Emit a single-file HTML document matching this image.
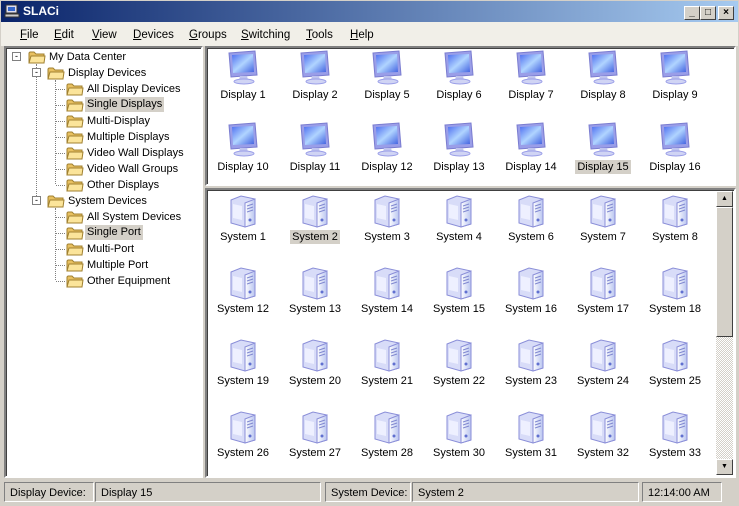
<!DOCTYPE html>
<html><head><style>
*{margin:0;padding:0;box-sizing:border-box}
body{width:739px;height:506px;background:#d4d0c8;font-family:"Liberation Sans",sans-serif;font-size:11px;position:relative;overflow:hidden;color:#000}
.a{position:absolute}
#title{left:0;top:0;width:739px;height:22px;background:linear-gradient(90deg,#0a246a,#a6caf0);border:1px solid #d4d0c8;border-bottom:none}
#title span{position:absolute;left:22px;top:3px;color:#fff;font-weight:bold;font-size:12px}
.tb{position:absolute;top:5px;width:16px;height:14px;background:#d4d0c8;border:1px solid;border-color:#fff #404040 #404040 #fff;font-size:10px;font-weight:bold;text-align:center;line-height:12px}
#menu{left:1px;top:22px;width:737px;height:24px;background:#f1efe8}
#menu span{position:absolute;top:7px;font-size:11.5px}
.pan{background:#fff;border:2px solid;border-color:#808080 #fff #fff #808080;box-shadow:inset 1px 1px 0 #404040}
.t{position:absolute;font-size:11px;white-space:nowrap;padding:0 2px;line-height:14px}
.sel{background:#d4d0c8}
.f{position:absolute;width:18px;height:14px}
.lab{position:absolute;width:72px;text-align:center;font-size:11px;line-height:14px;top:0}
.lab span{padding:0 2px}
.ic{position:absolute}
.sb{position:absolute;top:482px;height:20px;border:1px solid;border-color:#808080 #fff #fff #808080;font-size:11px;padding:4px 0 0 5px}
</style></head><body>
<svg width="0" height="0" style="position:absolute">
<defs>
<linearGradient id="scr" x1="0" y1="0" x2="1" y2="1"><stop offset="0" stop-color="#4f6ff0"/><stop offset=".5" stop-color="#b0d4ff"/><stop offset="1" stop-color="#4060e0"/></linearGradient>
<linearGradient id="tw" x1="0" y1="0" x2="1" y2="0"><stop offset="0" stop-color="#fff"/><stop offset="1" stop-color="#b8c4f0"/></linearGradient>
<symbol id="mon" viewBox="0 0 36 36"><path d="M4 3 L30 1 L32 25 L6 27 Z" fill="#9a9ee8" stroke="#7a7cd0"/><path d="M7 5 L28 4 L29 22 L8 23 Z" fill="url(#scr)"/><path d="M15 26 L22 26 L23 30 L14 30Z" fill="#c0c4ee"/><ellipse cx="19" cy="31.5" rx="10" ry="2.5" fill="#d0d4f4" stroke="#9a9ee8"/></symbol>
<symbol id="sys" viewBox="0 0 30 34"><path d="M3 6 L13 2 L27 5 L27 30 L17 33 L3 29Z" fill="#d8dcf8" stroke="#8a8ed8"/><path d="M17 9 L27 5 L27 30 L17 33Z" fill="url(#tw)" stroke="#8a8ed8"/><path d="M19 12 L25 10 M19 15 L25 13 M19 18 L25 16" stroke="#8088d0"/><circle cx="22" cy="26" r="1.5" fill="#6070d0"/><path d="M5 10 L14 12 L14 26 L5 24Z" fill="#eef0ff"/></symbol>
<symbol id="fold" viewBox="0 0 18 14"><path d="M1 3 L1 13 L16 13 L16 4 L8 4 L6 2 L2 2Z" fill="#e8c060" stroke="#a08030"/><path d="M1 13 L3 6 L17 6 L16 13Z" fill="#fbe49a" stroke="#a08030"/></symbol>
</defs></svg>

<div id="title" class="a"><svg class="a" style="left:3px;top:3px" width="16" height="14"><rect x="2" y="1" width="11" height="8" fill="#dde" stroke="#333"/><rect x="4" y="3" width="7" height="4" fill="#36c"/><rect x="1" y="10" width="14" height="3" fill="#ccc" stroke="#333"/></svg><span>SLACi</span>
<div class="tb" style="left:683px">_</div><div class="tb" style="left:699px">□</div><div class="tb" style="left:717px">×</div></div>
<div id="menu" class="a">
<span style="left:19px"><u>F</u>ile</span><span style="left:53px"><u>E</u>dit</span><span style="left:91px"><u>V</u>iew</span><span style="left:132px"><u>D</u>evices</span><span style="left:188px"><u>G</u>roups</span><span style="left:240px"><u>S</u>witching</span><span style="left:305px"><u>T</u>ools</span><span style="left:349px"><u>H</u>elp</span></div>

<div class="a pan" style="left:4px;top:46px;width:199px;height:432px"></div>
<div class="a" style="left:36px;top:64px;height:140px;border-left:1px dotted #808080"></div>
<div class="a" style="left:55px;top:80px;height:104px;border-left:1px dotted #808080"></div>
<div class="a" style="left:55px;top:208px;height:72px;border-left:1px dotted #808080"></div>
<div class="a" style="left:12px;top:52px;width:9px;height:9px;border:1px solid #808080;background:#fff;font-size:9px;line-height:6px;text-align:center">-</div>
<div class="a" style="left:32px;top:68px;width:9px;height:9px;border:1px solid #808080;background:#fff;font-size:9px;line-height:6px;text-align:center">-</div>
<div class="a" style="left:32px;top:196px;width:9px;height:9px;border:1px solid #808080;background:#fff;font-size:9px;line-height:6px;text-align:center">-</div>
<svg class="f" style="left:28px;top:50px"><use href="#fold"/></svg><div class="t" style="left:47px;top:50px">My Data Center</div>
<svg class="f" style="left:47px;top:66px"><use href="#fold"/></svg><div class="t" style="left:66px;top:66px">Display Devices</div>
<div class="a" style="left:56px;top:89px;width:9px;border-top:1px dotted #808080"></div><svg class="f" style="left:66px;top:82px"><use href="#fold"/></svg><div class="t" style="left:85px;top:82px">All Display Devices</div>
<div class="a" style="left:56px;top:105px;width:9px;border-top:1px dotted #808080"></div><svg class="f" style="left:66px;top:98px"><use href="#fold"/></svg><div class="t sel" style="left:85px;top:97px;line-height:15px">Single Displays</div>
<div class="a" style="left:56px;top:121px;width:9px;border-top:1px dotted #808080"></div><svg class="f" style="left:66px;top:114px"><use href="#fold"/></svg><div class="t" style="left:85px;top:114px">Multi-Display</div>
<div class="a" style="left:56px;top:137px;width:9px;border-top:1px dotted #808080"></div><svg class="f" style="left:66px;top:130px"><use href="#fold"/></svg><div class="t" style="left:85px;top:130px">Multiple Displays</div>
<div class="a" style="left:56px;top:153px;width:9px;border-top:1px dotted #808080"></div><svg class="f" style="left:66px;top:146px"><use href="#fold"/></svg><div class="t" style="left:85px;top:146px">Video Wall Displays</div>
<div class="a" style="left:56px;top:169px;width:9px;border-top:1px dotted #808080"></div><svg class="f" style="left:66px;top:162px"><use href="#fold"/></svg><div class="t" style="left:85px;top:162px">Video Wall Groups</div>
<div class="a" style="left:56px;top:185px;width:9px;border-top:1px dotted #808080"></div><svg class="f" style="left:66px;top:178px"><use href="#fold"/></svg><div class="t" style="left:85px;top:178px">Other Displays</div>
<svg class="f" style="left:47px;top:194px"><use href="#fold"/></svg><div class="t" style="left:66px;top:194px">System Devices</div>
<div class="a" style="left:56px;top:217px;width:9px;border-top:1px dotted #808080"></div><svg class="f" style="left:66px;top:210px"><use href="#fold"/></svg><div class="t" style="left:85px;top:210px">All System Devices</div>
<div class="a" style="left:56px;top:233px;width:9px;border-top:1px dotted #808080"></div><svg class="f" style="left:66px;top:226px"><use href="#fold"/></svg><div class="t sel" style="left:85px;top:225px;line-height:15px">Single Port</div>
<div class="a" style="left:56px;top:249px;width:9px;border-top:1px dotted #808080"></div><svg class="f" style="left:66px;top:242px"><use href="#fold"/></svg><div class="t" style="left:85px;top:242px">Multi-Port</div>
<div class="a" style="left:56px;top:265px;width:9px;border-top:1px dotted #808080"></div><svg class="f" style="left:66px;top:258px"><use href="#fold"/></svg><div class="t" style="left:85px;top:258px">Multiple Port</div>
<div class="a" style="left:56px;top:281px;width:9px;border-top:1px dotted #808080"></div><svg class="f" style="left:66px;top:274px"><use href="#fold"/></svg><div class="t" style="left:85px;top:274px">Other Equipment</div>

<div class="a pan" style="left:205px;top:46px;width:531px;height:140px"></div>
<div class="a pan" style="left:205px;top:188px;width:531px;height:290px"></div>
<div class="a" style="left:716px;top:191px;width:17px;height:284px;background:repeating-conic-gradient(#fff 0 25%,#d4d0c8 0 50%) 0 0/2px 2px"></div>
<div class="a" style="left:716px;top:191px;width:17px;height:16px;background:#d4d0c8;border:1px solid;border-color:#fff #404040 #404040 #fff;font-size:7px;text-align:center;line-height:13px">▲</div>
<div class="a" style="left:716px;top:207px;width:17px;height:130px;background:#d4d0c8;border:1px solid;border-color:#fff #404040 #404040 #fff"></div>
<div class="a" style="left:716px;top:459px;width:17px;height:16px;background:#d4d0c8;border:1px solid;border-color:#fff #404040 #404040 #fff;font-size:7px;text-align:center;line-height:14px">▼</div>

<svg class="ic" style="left:225px;top:50px" width="36" height="36"><use href="#mon"/></svg><div class="lab" style="left:207px;top:88px">Display 1</div>
<svg class="ic" style="left:297px;top:50px" width="36" height="36"><use href="#mon"/></svg><div class="lab" style="left:279px;top:88px">Display 2</div>
<svg class="ic" style="left:369px;top:50px" width="36" height="36"><use href="#mon"/></svg><div class="lab" style="left:351px;top:88px">Display 5</div>
<svg class="ic" style="left:441px;top:50px" width="36" height="36"><use href="#mon"/></svg><div class="lab" style="left:423px;top:88px">Display 6</div>
<svg class="ic" style="left:513px;top:50px" width="36" height="36"><use href="#mon"/></svg><div class="lab" style="left:495px;top:88px">Display 7</div>
<svg class="ic" style="left:585px;top:50px" width="36" height="36"><use href="#mon"/></svg><div class="lab" style="left:567px;top:88px">Display 8</div>
<svg class="ic" style="left:657px;top:50px" width="36" height="36"><use href="#mon"/></svg><div class="lab" style="left:639px;top:88px">Display 9</div>
<svg class="ic" style="left:225px;top:122px" width="36" height="36"><use href="#mon"/></svg><div class="lab" style="left:207px;top:160px">Display 10</div>
<svg class="ic" style="left:297px;top:122px" width="36" height="36"><use href="#mon"/></svg><div class="lab" style="left:279px;top:160px">Display 11</div>
<svg class="ic" style="left:369px;top:122px" width="36" height="36"><use href="#mon"/></svg><div class="lab" style="left:351px;top:160px">Display 12</div>
<svg class="ic" style="left:441px;top:122px" width="36" height="36"><use href="#mon"/></svg><div class="lab" style="left:423px;top:160px">Display 13</div>
<svg class="ic" style="left:513px;top:122px" width="36" height="36"><use href="#mon"/></svg><div class="lab" style="left:495px;top:160px">Display 14</div>
<svg class="ic" style="left:585px;top:122px" width="36" height="36"><use href="#mon"/></svg><div class="lab" style="left:567px;top:160px"><span class="sel" style="padding:1px 2px">Display 15</span></div>
<svg class="ic" style="left:657px;top:122px" width="36" height="36"><use href="#mon"/></svg><div class="lab" style="left:639px;top:160px">Display 16</div>

<svg class="ic" style="left:228px;top:194px" width="30" height="34"><use href="#sys"/></svg><div class="lab" style="left:207px;top:230px">System 1</div>
<svg class="ic" style="left:300px;top:194px" width="30" height="34"><use href="#sys"/></svg><div class="lab" style="left:279px;top:230px"><span class="sel" style="padding:1px 2px">System 2</span></div>
<svg class="ic" style="left:372px;top:194px" width="30" height="34"><use href="#sys"/></svg><div class="lab" style="left:351px;top:230px">System 3</div>
<svg class="ic" style="left:444px;top:194px" width="30" height="34"><use href="#sys"/></svg><div class="lab" style="left:423px;top:230px">System 4</div>
<svg class="ic" style="left:516px;top:194px" width="30" height="34"><use href="#sys"/></svg><div class="lab" style="left:495px;top:230px">System 6</div>
<svg class="ic" style="left:588px;top:194px" width="30" height="34"><use href="#sys"/></svg><div class="lab" style="left:567px;top:230px">System 7</div>
<svg class="ic" style="left:660px;top:194px" width="30" height="34"><use href="#sys"/></svg><div class="lab" style="left:639px;top:230px">System 8</div>

<svg class="ic" style="left:228px;top:266px" width="30" height="34"><use href="#sys"/></svg><div class="lab" style="left:207px;top:302px">System 12</div>
<svg class="ic" style="left:300px;top:266px" width="30" height="34"><use href="#sys"/></svg><div class="lab" style="left:279px;top:302px">System 13</div>
<svg class="ic" style="left:372px;top:266px" width="30" height="34"><use href="#sys"/></svg><div class="lab" style="left:351px;top:302px">System 14</div>
<svg class="ic" style="left:444px;top:266px" width="30" height="34"><use href="#sys"/></svg><div class="lab" style="left:423px;top:302px">System 15</div>
<svg class="ic" style="left:516px;top:266px" width="30" height="34"><use href="#sys"/></svg><div class="lab" style="left:495px;top:302px">System 16</div>
<svg class="ic" style="left:588px;top:266px" width="30" height="34"><use href="#sys"/></svg><div class="lab" style="left:567px;top:302px">System 17</div>
<svg class="ic" style="left:660px;top:266px" width="30" height="34"><use href="#sys"/></svg><div class="lab" style="left:639px;top:302px">System 18</div>

<svg class="ic" style="left:228px;top:338px" width="30" height="34"><use href="#sys"/></svg><div class="lab" style="left:207px;top:374px">System 19</div>
<svg class="ic" style="left:300px;top:338px" width="30" height="34"><use href="#sys"/></svg><div class="lab" style="left:279px;top:374px">System 20</div>
<svg class="ic" style="left:372px;top:338px" width="30" height="34"><use href="#sys"/></svg><div class="lab" style="left:351px;top:374px">System 21</div>
<svg class="ic" style="left:444px;top:338px" width="30" height="34"><use href="#sys"/></svg><div class="lab" style="left:423px;top:374px">System 22</div>
<svg class="ic" style="left:516px;top:338px" width="30" height="34"><use href="#sys"/></svg><div class="lab" style="left:495px;top:374px">System 23</div>
<svg class="ic" style="left:588px;top:338px" width="30" height="34"><use href="#sys"/></svg><div class="lab" style="left:567px;top:374px">System 24</div>
<svg class="ic" style="left:660px;top:338px" width="30" height="34"><use href="#sys"/></svg><div class="lab" style="left:639px;top:374px">System 25</div>

<svg class="ic" style="left:228px;top:410px" width="30" height="34"><use href="#sys"/></svg><div class="lab" style="left:207px;top:446px">System 26</div>
<svg class="ic" style="left:300px;top:410px" width="30" height="34"><use href="#sys"/></svg><div class="lab" style="left:279px;top:446px">System 27</div>
<svg class="ic" style="left:372px;top:410px" width="30" height="34"><use href="#sys"/></svg><div class="lab" style="left:351px;top:446px">System 28</div>
<svg class="ic" style="left:444px;top:410px" width="30" height="34"><use href="#sys"/></svg><div class="lab" style="left:423px;top:446px">System 30</div>
<svg class="ic" style="left:516px;top:410px" width="30" height="34"><use href="#sys"/></svg><div class="lab" style="left:495px;top:446px">System 31</div>
<svg class="ic" style="left:588px;top:410px" width="30" height="34"><use href="#sys"/></svg><div class="lab" style="left:567px;top:446px">System 32</div>
<svg class="ic" style="left:660px;top:410px" width="30" height="34"><use href="#sys"/></svg><div class="lab" style="left:639px;top:446px">System 33</div>

<div class="sb" style="left:4px;width:90px">Display Device:</div>
<div class="sb" style="left:95px;width:226px">Display 15</div>
<div class="sb" style="left:325px;width:86px">System Device:</div>
<div class="sb" style="left:412px;width:227px">System 2</div>
<div class="sb" style="left:642px;width:80px">12:14:00 AM</div>
</body></html>
